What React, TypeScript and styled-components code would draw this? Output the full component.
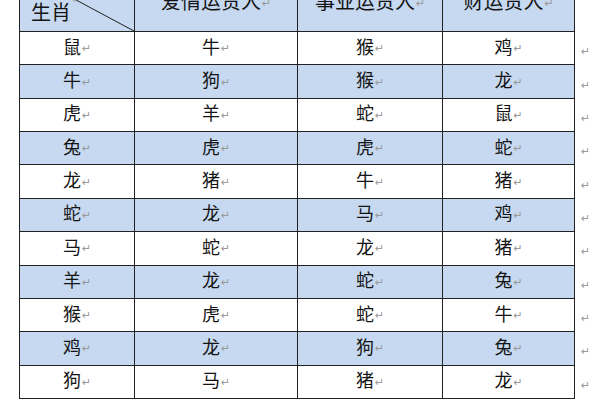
import React from "react";
import styled, { createGlobalStyle } from "styled-components";

const Global = createGlobalStyle`
  html, body { margin: 0; padding: 0; background: #ffffff; overflow: hidden; }
  body { font-family: "Noto Sans CJK SC", "Noto Sans", sans-serif; }
`;

const Page = styled.div`
  width: 600px;
  height: 400px;
  overflow: hidden;
  background: #fff;
`;

const Grid = styled.div`
  display: grid;
  grid-template-columns: 116px 163px 145px 132px 20px;
  margin-left: 19px;
  margin-top: -31px;
  border-top: 1px solid #222;
`;

const Cell = styled.div<{ $shade?: boolean; $header?: boolean; $first?: boolean }>`
  box-sizing: border-box;
  height: ${(p) => (p.$header ? "62px" : "33.36px")};
  display: flex;
  align-items: center;
  justify-content: center;
  padding-bottom: ${(p) => (p.$header ? "0" : "5px")};
  background: ${(p) => (p.$shade || p.$header ? "#c6d9f0" : "#ffffff")};
  border-right: 1px solid #222;
  border-bottom: 1px solid #222;
  border-left: ${(p) => (p.$first ? "1px solid #222" : "none")};
  color: #141414;
  font-size: ${(p) => (p.$header ? "20px" : "18px")};
  line-height: 1;
  white-space: nowrap;
`;

const CornerCell = styled(Cell)`
  position: relative;
  justify-content: flex-start;
  align-items: flex-end;
  padding: 0 0 9px 11px;
`;

const Diagonal = styled.svg`
  position: absolute;
  left: 0;
  top: 0;
  width: 100%;
  height: 100%;
  pointer-events: none;
`;

const Mark = styled.span`
  font-size: 11px;
  color: #999;
  margin-left: 1px;
  padding-top: 6px;
  align-self: center;
  font-family: "DejaVu Sans", sans-serif;
`;

const Outside = styled.div`
  height: 33.36px;
  display: flex;
  align-items: center;
  padding-left: 5px;
  box-sizing: border-box;
`;

const OutsideHeader = styled.div`
  height: 62px;
`;

const rows: [string, string, string, string][] = [
  ["鼠", "牛", "猴", "鸡"],
  ["牛", "狗", "猴", "龙"],
  ["虎", "羊", "蛇", "鼠"],
  ["兔", "虎", "虎", "蛇"],
  ["龙", "猪", "牛", "猪"],
  ["蛇", "龙", "马", "鸡"],
  ["马", "蛇", "龙", "猪"],
  ["羊", "龙", "蛇", "兔"],
  ["猴", "虎", "蛇", "牛"],
  ["鸡", "龙", "狗", "兔"],
  ["狗", "马", "猪", "龙"],
];

const headers = ["爱情运贵人", "事业运贵人", "财运贵人"];

export default function App() {
  return (
    <Page>
      <Global />
      <Grid>
        <CornerCell $header $first>
          <Diagonal viewBox="0 0 115 61" preserveAspectRatio="none">
            <line x1="0" y1="0" x2="115" y2="61" stroke="#222" strokeWidth="1" vectorEffect="non-scaling-stroke" />
          </Diagonal>
          生肖<Mark>↵</Mark>
        </CornerCell>
        {headers.map((h) => (
          <Cell $header key={h}>
            {h}
            <Mark>↵</Mark>
          </Cell>
        ))}
        <OutsideHeader />
        {rows.map((r, i) => (
          <React.Fragment key={i}>
            {r.map((c, j) => (
              <Cell key={j} $shade={i % 2 === 1} $first={j === 0}>
                {c}
                <Mark>↵</Mark>
              </Cell>
            ))}
            <Outside>
              <Mark>↵</Mark>
            </Outside>
          </React.Fragment>
        ))}
      </Grid>
    </Page>
  );
}
